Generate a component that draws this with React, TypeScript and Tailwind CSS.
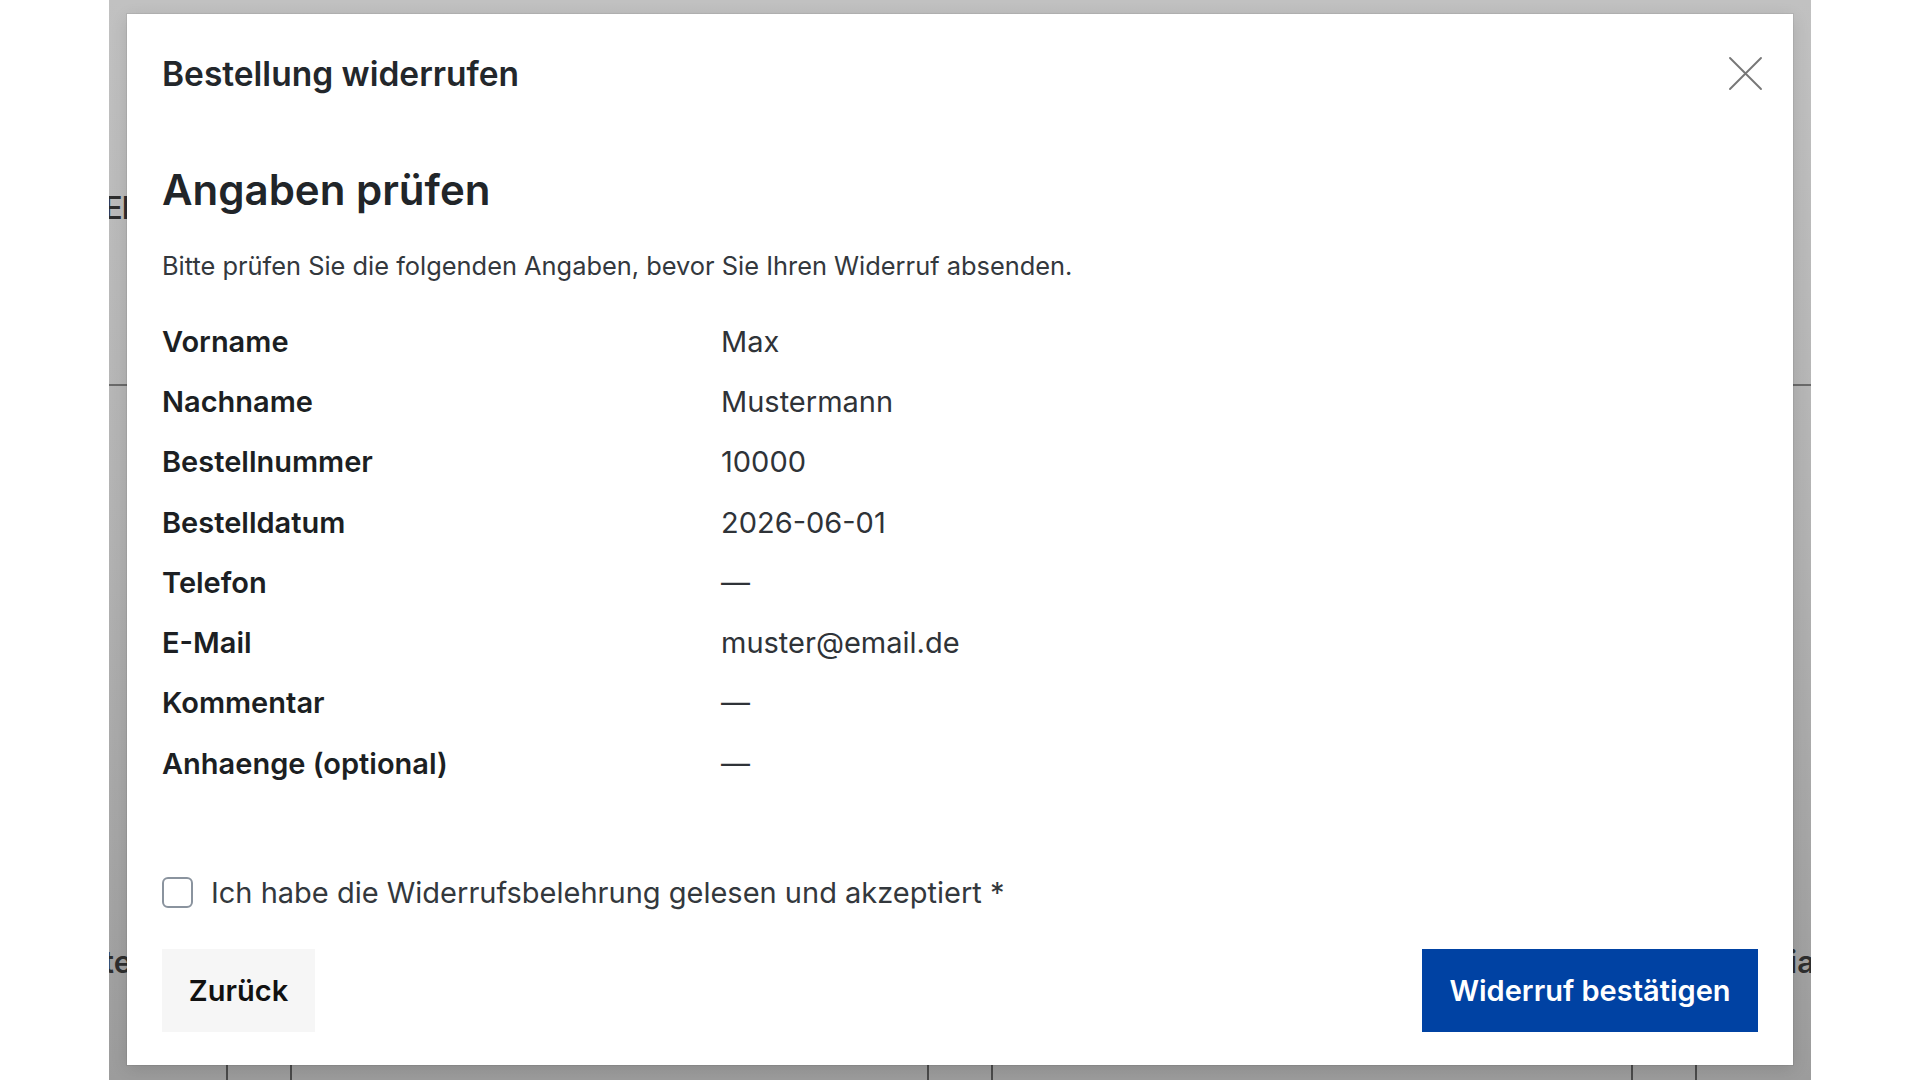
const rows: { label: string; value: string }[] = [
  { label: 'Vorname', value: 'Max' },
  { label: 'Nachname', value: 'Mustermann' },
  { label: 'Bestellnummer', value: '10000' },
  { label: 'Bestelldatum', value: '2026-06-01' },
  { label: 'Telefon', value: '—' },
  { label: 'E-Mail', value: 'muster@email.de' },
  { label: 'Kommentar', value: '—' },
  { label: 'Anhaenge (optional)', value: '—' },
];

function CloseIcon() {
  return (
    <svg width="35" height="35" viewBox="0 0 35 35" fill="none" stroke="currentColor" strokeWidth="1.9" strokeLinecap="round">
      <path d="M2 2 33 33M33 2 2 33" />
    </svg>
  );
}

function BackgroundPage() {
  // the page under the dimmed overlay, mostly hidden by the dialog
  return (
    <div className="flex h-full flex-col text-[#2e2e2e]">
      <div className="mt-[188px] -ml-[5px] text-[31px] font-medium leading-[40px] tracking-[-1px]">El</div>
      <div className="mt-[156px] h-[2px] bg-[#6a6a6a]" />
      <div className="mt-[556px] flex justify-between text-[31px] font-semibold leading-[40px]">
        <span className="-ml-[6px]">te</span>
        <span className="-mr-[4px]">ia</span>
      </div>
      <div className="mt-auto flex h-[40px]">
        <div className="ml-[117px] w-[66px] border-x-2 border-[#4a4a4a]" />
        <div className="ml-[635px] w-[66px] border-x-2 border-[#4a4a4a]" />
        <div className="ml-[638px] w-[66px] border-x-2 border-[#4a4a4a]" />
      </div>
    </div>
  );
}

export default function App() {
  return (
    <div className="h-[1080px] w-full overflow-hidden bg-white font-['Inter',sans-serif]">
      <div className="relative ml-[109px] h-full w-[1702px] overflow-hidden bg-gradient-to-b from-[#c1c1c1] via-[#b2b2b2] to-[#9c9c9c]">
        <BackgroundPage />

        <div className="absolute left-[18px] top-[14px] flex h-[1051px] w-[1666px] flex-col bg-white shadow-[0_0_0_1px_rgba(0,0,0,0.06),0_4px_16px_rgba(0,0,0,0.12)]">
          <div className="mt-[38.5px] flex h-[42px] items-center justify-between pl-[35px] pr-[30px]">
            <h2 className="text-[33.5px] font-semibold leading-[40px] text-[#23272b]">Bestellung widerrufen</h2>
            <button className="text-[#777]">
              <CloseIcon />
            </button>
          </div>

          <div className="flex flex-1 flex-col px-[35px]">
            <h1 className="mt-[70.5px] text-[42px] font-semibold leading-[50px] text-[#212529]">Angaben prüfen</h1>
            <p className="mt-[35px] text-[25.4px] leading-[32px] text-[#33383d]">
              Bitte prüfen Sie die folgenden Angaben, bevor Sie Ihren Widerruf absenden.
            </p>

            <dl className="mt-[29.5px] grid grid-cols-[559px_1fr] auto-rows-[60.3px] items-center text-[29px] leading-[36px]">
              {rows.map((r) => (
                <div key={r.label} className="contents">
                  <dt className="font-semibold text-[#1c1f23]">{r.label}</dt>
                  <dd className="text-[#2f3338]">{r.value}</dd>
                </div>
              ))}
            </dl>

            <label className="mt-[81px] flex items-center gap-[18px] text-[29px] leading-[36px] text-[#33383d]">
              <span className="h-[31px] w-[31px] shrink-0 rounded-[6px] border-2 border-[#8a939e] bg-white" />
              Ich habe die Widerrufsbelehrung gelesen und akzeptiert *
            </label>

            <div className="mt-[38px] flex items-center justify-between">
              <button className="h-[83px] w-[153px] bg-[#f6f6f6] text-[29px] font-semibold text-[#111]">Zurück</button>
              <button className="h-[83px] w-[336px] bg-[#0042a3] text-[29px] font-semibold text-white">
                Widerruf bestätigen
              </button>
            </div>
          </div>
        </div>
      </div>
    </div>
  );
}
